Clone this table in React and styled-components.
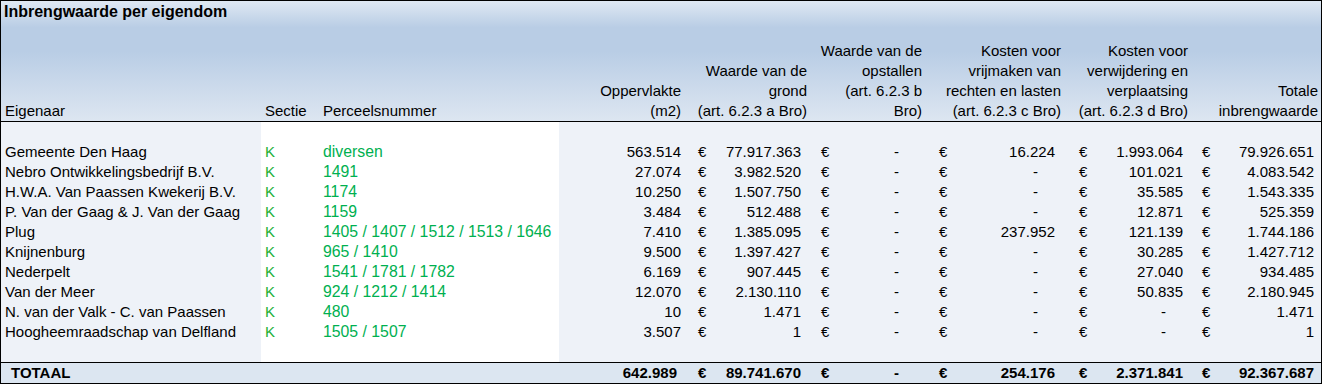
import styled, { createGlobalStyle } from "styled-components";

const rows = [
  ["Gemeente Den Haag", "K", "diversen", "563.514", "77.917.363", "-", "16.224", "1.993.064", "79.926.651"],
  ["Nebro Ontwikkelingsbedrijf B.V.", "K", "1491", "27.074", "3.982.520", "-", "-", "101.021", "4.083.542"],
  ["H.W.A. Van Paassen Kwekerij B.V.", "K", "1174", "10.250", "1.507.750", "-", "-", "35.585", "1.543.335"],
  ["P. Van der Gaag & J. Van der Gaag", "K", "1159", "3.484", "512.488", "-", "-", "12.871", "525.359"],
  ["Plug", "K", "1405 / 1407 / 1512 / 1513 / 1646", "7.410", "1.385.095", "-", "237.952", "121.139", "1.744.186"],
  ["Knijnenburg", "K", "965 / 1410", "9.500", "1.397.427", "-", "-", "30.285", "1.427.712"],
  ["Nederpelt", "K", "1541 / 1781 / 1782", "6.169", "907.445", "-", "-", "27.040", "934.485"],
  ["Van der Meer", "K", "924 / 1212 / 1414", "12.070", "2.130.110", "-", "-", "50.835", "2.180.945"],
  ["N. van der Valk - C. van Paassen", "K", "480", "10", "1.471", "-", "-", "-", "1.471"],
  ["Hoogheemraadschap van Delfland", "K", "1505 / 1507", "3.507", "1", "-", "-", "-", "1"],
];

const totals = ["642.989", "89.741.670", "-", "254.176", "2.371.841", "92.367.687"];

// euro columns: padding before the € sign and after the amount
const money = [
  { pl: 14, pr: 9 },
  { pl: 11, pr: 9 },
  { pl: 14, pr: 9 },
  { pl: 15, pr: 8 },
  { pl: 11, pr: 7 },
];

const moneyHeads = [
  ["Waarde van de", "grond", "(art. 6.2.3 a Bro)"],
  ["Waarde van de", "opstallen", "(art. 6.2.3 b", "Bro)"],
  ["Kosten voor", "vrijmaken van", "rechten en lasten", "(art. 6.2.3 c Bro)"],
  ["Kosten voor", "verwijdering en", "verplaatsing", "(art. 6.2.3 d Bro)"],
  ["Totale", "inbrengwaarde"],
];

const COLS = "260px 58px 240px 125px 126px 115px 139px 127px 130px";

export default function App() {
  return (
    <Sheet>
      <GlobalStyle />
      <Header>
        <Title>Inbrengwaarde per eigendom</Title>
        <HeadRow>
          <HeadCell>Eigenaar</HeadCell>
          <HeadCell>Sectie</HeadCell>
          <HeadCell>Perceelsnummer</HeadCell>
          <HeadCell $right>
            Oppervlakte
            <br />
            (m2)
          </HeadCell>
          {moneyHeads.map((lines, i) => (
            <HeadCell $right key={i}>
              {lines.map((l, j) => (
                <div key={j}>{l}</div>
              ))}
            </HeadCell>
          ))}
        </HeadRow>
      </Header>

      <Body>
        <BlankRow />
        {rows.map((r, i) => (
          <DataRow key={i} row={r} />
        ))}
        <BlankRow />
      </Body>

      <TotalRow>
        <TotalLabel>TOTAAL</TotalLabel>
        <span />
        <span />
        <Num $pr={7}>{totals[0]}</Num>
        {money.map((m, i) => (
          <Money key={i} $pl={m.pl} $pr={m.pr}>
            <span>€</span>
            <Amount $dash={totals[i + 1] === "-"}>{totals[i + 1]}</Amount>
          </Money>
        ))}
      </TotalRow>
    </Sheet>
  );
}

function BlankRow() {
  return (
    <Row>
      <Cell $zone="shade" />
      <Cell $zone="plain" />
      <Cell $zone="plain" />
      {[0, 1, 2, 3, 4, 5].map((i) => (
        <Cell $zone="shade" key={i} />
      ))}
    </Row>
  );
}

function DataRow({ row }) {
  const [owner, sectie, perceel, opp, ...amounts] = row;
  return (
    <Row>
      <Cell $zone="shade">{owner}</Cell>
      <Cell $zone="plain" $green="#22b035">
        {sectie}
      </Cell>
      <Cell $zone="plain" $green="#00b050" $size={15.8}>
        {perceel}
      </Cell>
      <Num $zone="shade" $pr={3}>
        {opp}
      </Num>
      {amounts.map((a, i) => (
        <Money key={i} $zone="shade" $pl={money[i].pl} $pr={money[i].pr}>
          <span>€</span>
          <Amount $dash={a === "-"}>{a}</Amount>
        </Money>
      ))}
    </Row>
  );
}

const GlobalStyle = createGlobalStyle`
  * {
    margin: 0;
    padding: 0;
    box-sizing: border-box;
  }
  body {
    background: #ffffff;
    font-family: "Liberation Sans", Arial, sans-serif;
    color: #000;
  }
`;

const Sheet = styled.div`
  width: 1322px;
  border: 1px solid #000;
  font-size: 15px;
`;

const Header = styled.div`
  background: linear-gradient(
    to bottom,
    #dfe8f3 0%,
    #b9cde5 22%,
    #b9cde5 42%,
    #dde6f1 100%
  );
  border-bottom: 1px solid #000;
`;

const Title = styled.div`
  font-size: 16px;
  font-weight: 700;
  line-height: 21px;
  padding-left: 3px;
`;

const HeadRow = styled.div`
  display: grid;
  grid-template-columns: ${COLS};
  height: 99px;
  align-items: end;
`;

const HeadCell = styled.div`
  line-height: 20px;
  padding: 0 ${(p) => (p.$right ? "3px" : "0")} 0 ${(p) => (p.$right ? "0" : "4px")};
  text-align: ${(p) => (p.$right ? "right" : "left")};
  white-space: nowrap;
`;

const Body = styled.div``;

const Row = styled.div`
  display: grid;
  grid-template-columns: ${COLS};
  height: 20px;
  line-height: 20px;
`;

const Cell = styled.div`
  background: ${(p) => (p.$zone === "plain" ? "#ffffff" : "#eef2f8")};
  color: ${(p) => p.$green || "#000"};
  font-size: ${(p) => (p.$size ? `${p.$size}px` : "inherit")};
  padding-left: 4px;
  white-space: nowrap;
  overflow: hidden;
`;

const Num = styled.div`
  background: ${(p) => (p.$zone === "shade" ? "#eef2f8" : "transparent")};
  text-align: right;
  padding-right: ${(p) => p.$pr}px;
`;

const Money = styled.div`
  background: ${(p) => (p.$zone === "shade" ? "#eef2f8" : "transparent")};
  display: flex;
  justify-content: space-between;
  padding-left: ${(p) => p.$pl}px;
  padding-right: ${(p) => p.$pr}px;
`;

const Amount = styled.span`
  margin-right: ${(p) => (p.$dash ? "17px" : "0")};
`;

const TotalRow = styled.div`
  display: grid;
  grid-template-columns: ${COLS};
  height: 21px;
  line-height: 20px;
  border-top: 1px solid #000;
  background: #dce6f1;
  font-weight: 700;
`;

const TotalLabel = styled.div`
  padding-left: 10px;
`;
